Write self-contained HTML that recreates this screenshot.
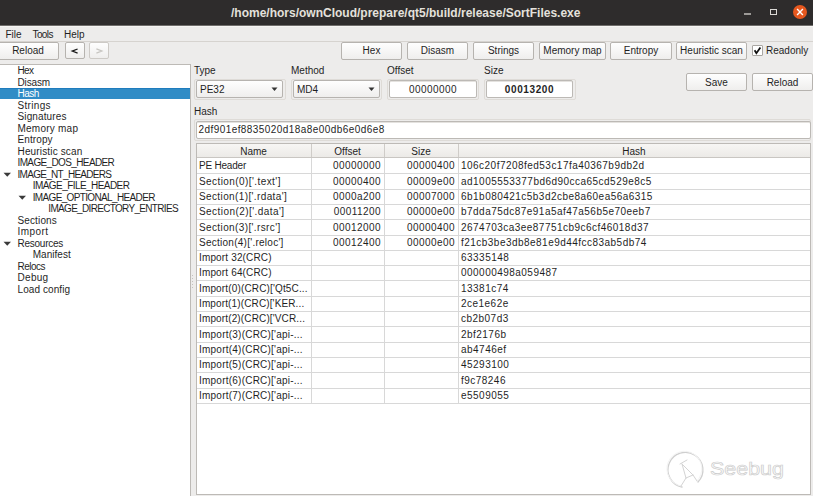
<!DOCTYPE html>
<html><head><meta charset="utf-8">
<style>
*{margin:0;padding:0;box-sizing:border-box}
html,body{width:813px;height:496px;overflow:hidden;background:#edeceb;font-family:"Liberation Sans",sans-serif;font-size:10px;color:#1f1f1f}
.a{position:absolute}
.t{position:absolute;white-space:nowrap;line-height:12px;height:12px}
#title{left:0;top:0;width:813px;height:25px;background:#2e2c2c}
.btn{position:absolute;height:18px;border:1px solid #b6b3af;border-radius:2px;background:linear-gradient(#fefefe,#efeeed);text-align:center;line-height:15px;color:#1f1f1f;white-space:nowrap}
.frame{position:absolute;border:1px solid #dedbd7;border-radius:2px}
.edit{position:absolute;background:#fff;border:1px solid #bcb9b5;border-radius:2px;box-shadow:inset 0 1px 0 #e4e2df}
.hl{position:absolute;height:1px;background:#d8d8d8}
.vl{position:absolute;width:1px;background:#d8d8d8}
.tr{position:absolute;white-space:nowrap;line-height:12px}
</style></head><body>
<div id="title" class="a"></div>
<div class="a" style="left:0;top:25px;width:813px;height:1px;background:#6f6d6b"></div>
<div class="a" style="left:0;top:26px;width:813px;height:1px;background:#f6f5f3"></div>
<div class="t" style="left:231px;top:6px;font-weight:bold;font-size:12px;color:#e4e1dc;line-height:14px;height:14px">/home/hors/ownCloud/prepare/qt5/build/release/SortFiles.exe</div>
<!-- window buttons -->
<div class="a" style="left:744px;top:13px;width:7px;height:2px;background:#9c9a97"></div>
<div class="a" style="left:770px;top:9px;width:7px;height:6px;border:1px solid #dcdad6"></div>
<div class="a" style="left:792.5px;top:5px;width:14px;height:14px;border-radius:50%;background:#e6581f"></div>
<svg class="a" style="left:792.5px;top:5px" width="14" height="14"><path d="M4.1 4.1L9.9 9.9M9.9 4.1L4.1 9.9" stroke="#fff" stroke-width="1.4"/></svg>

<!-- menu -->
<div class="t" style="left:5.5px;top:28.5px">File</div>
<div class="t" style="left:32.5px;top:28.5px;letter-spacing:-0.6px">Tools</div>
<div class="t" style="left:64px;top:28.5px">Help</div>
<div class="a" style="left:0;top:41px;width:813px;height:1px;background:#d6d3cf"></div>

<!-- toolbar -->
<div class="btn" style="left:-3px;top:42px;width:62px">Reload</div>
<div class="btn" style="left:65px;top:42px;width:20px;height:17px"></div>
<svg class="a" style="left:65px;top:42px" width="20" height="17"><path d="M12.6 7L7.2 9.1L12.6 11.2" stroke="#1a1a1a" stroke-width="1.25" fill="none"/></svg>
<div class="btn" style="left:89px;top:42px;width:20px;height:17px;border-color:#cdcac6"></div>
<svg class="a" style="left:89px;top:42px" width="20" height="17"><path d="M7.4 6.9L12.8 9L7.4 11.1" stroke="#c8c6c2" stroke-width="1.3" fill="none"/></svg>
<div class="btn" style="left:341px;top:42px;width:61px">Hex</div>
<div class="btn" style="left:407px;top:42px;width:61px">Disasm</div>
<div class="btn" style="left:473px;top:42px;width:61px">Strings</div>
<div class="btn" style="left:539px;top:42px;width:67px">Memory map</div>
<div class="btn" style="left:610px;top:42px;width:62px">Entropy</div>
<div class="btn" style="left:676px;top:42px;width:71px">Heuristic scan</div>
<div class="a" style="left:752px;top:45px;width:11px;height:11px;background:#fff;border:1px solid #a9a6a2;border-radius:1px"></div>
<svg class="a" style="left:752px;top:45px" width="11" height="11"><path d="M2.6 5.2L4.4 8.2L8.4 2.6" stroke="#111" stroke-width="1.8" fill="none"/></svg>
<div class="t" style="left:766px;top:45px">Readonly</div>

<!-- tree -->
<div class="a" style="left:0;top:64px;width:191px;height:432px;background:#fff;border-top:1px solid #bdbab6;border-right:1px solid #bdbab6"></div>
<div class="a" style="left:0;top:88px;width:190px;height:11px;background:#308cc6;border-top:1px solid #1f7cbd"></div>
<div class="tr" style="left:17.5px;top:65.03px;color:#1f1f1f;letter-spacing:-0.700px;">Hex</div>
<div class="tr" style="left:17.5px;top:76.53px;color:#1f1f1f;letter-spacing:-0.140px;">Disasm</div>
<div class="tr" style="left:17.5px;top:88.03px;color:#fff;letter-spacing:-0.533px;">Hash</div>
<div class="tr" style="left:17.5px;top:99.53px;color:#1f1f1f;letter-spacing:0.333px;">Strings</div>
<div class="tr" style="left:17.5px;top:111.03px;color:#1f1f1f;letter-spacing:0.122px;">Signatures</div>
<div class="tr" style="left:17.5px;top:122.53px;color:#1f1f1f;letter-spacing:0.233px;">Memory map</div>
<div class="tr" style="left:17.5px;top:134.03px;color:#1f1f1f;letter-spacing:0.100px;">Entropy</div>
<div class="tr" style="left:17.5px;top:145.53px;color:#1f1f1f;letter-spacing:0.154px;">Heuristic scan</div>
<div class="tr" style="left:17.5px;top:157.03px;color:#1f1f1f;letter-spacing:-0.627px;">IMAGE_DOS_HEADER</div>
<div class="tr" style="left:17.5px;top:168.53px;color:#1f1f1f;letter-spacing:-0.700px;">IMAGE_NT_HEADERS</div>
<svg class="a" style="left:3.0px;top:172.0px" width="9" height="6"><path d="M0.5 0.8H8L4.25 4.8z" fill="#3a3a3a"/></svg>
<div class="tr" style="left:32.7px;top:180.03px;color:#1f1f1f;letter-spacing:-0.555px;">IMAGE_FILE_HEADER</div>
<div class="tr" style="left:32.7px;top:191.53px;color:#1f1f1f;letter-spacing:-0.645px;">IMAGE_OPTIONAL_HEADER</div>
<svg class="a" style="left:18.2px;top:195.0px" width="9" height="6"><path d="M0.5 0.8H8L4.25 4.8z" fill="#3a3a3a"/></svg>
<div class="tr" style="left:48.3px;top:203.03px;color:#1f1f1f;letter-spacing:-0.680px;">IMAGE_DIRECTORY_ENTRIES</div>
<div class="tr" style="left:17.5px;top:214.53px;color:#1f1f1f;letter-spacing:0.129px;">Sections</div>
<div class="tr" style="left:17.5px;top:226.03px;color:#1f1f1f;letter-spacing:0.420px;">Import</div>
<div class="tr" style="left:17.5px;top:237.53px;color:#1f1f1f;letter-spacing:-0.250px;">Resources</div>
<svg class="a" style="left:3.0px;top:241.0px" width="9" height="6"><path d="M0.5 0.8H8L4.25 4.8z" fill="#3a3a3a"/></svg>
<div class="tr" style="left:32.7px;top:249.03px;color:#1f1f1f;letter-spacing:0.043px;">Manifest</div>
<div class="tr" style="left:17.5px;top:260.53px;color:#1f1f1f;letter-spacing:-0.520px;">Relocs</div>
<div class="tr" style="left:17.5px;top:272.03px;color:#1f1f1f;letter-spacing:0.300px;">Debug</div>
<div class="tr" style="left:17.5px;top:283.53px;color:#1f1f1f;letter-spacing:0.090px;">Load config</div>

<!-- right panel -->
<div class="t" style="left:194px;top:65px">Type</div>
<div class="t" style="left:291px;top:65px">Method</div>
<div class="t" style="left:387px;top:65px">Offset</div>
<div class="t" style="left:484px;top:65px">Size</div>

<div class="frame" style="left:194px;top:79px;width:92px;height:21px"></div>
<div class="btn" style="left:196px;top:80px;width:87px;height:18px;text-align:left;padding-left:3px;line-height:17px">PE32</div>
<svg class="a" style="left:271px;top:87px" width="8" height="5"><path d="M0.5 0.5H6.5L3.5 4z" fill="#333"/></svg>
<div class="frame" style="left:291px;top:79px;width:91px;height:21px"></div>
<div class="btn" style="left:293px;top:80px;width:87px;height:18px;text-align:left;padding-left:3px;line-height:17px">MD4</div>
<svg class="a" style="left:368px;top:87px" width="8" height="5"><path d="M0.5 0.5H6.5L3.5 4z" fill="#333"/></svg>

<div class="frame" style="left:387px;top:79px;width:92px;height:21px"></div>
<div class="edit" style="left:389px;top:80px;width:88px;height:18px;text-align:center;line-height:17px;letter-spacing:0.45px">00000000</div>
<div class="frame" style="left:484px;top:79px;width:92px;height:21px"></div>
<div class="edit" style="left:486px;top:80px;width:87px;height:18px;text-align:center;line-height:17px;font-weight:bold;letter-spacing:0.6px">00013200</div>

<div class="btn" style="left:686px;top:73px;width:61px;line-height:15px;padding-top:1px">Save</div>
<div class="btn" style="left:752px;top:73px;width:61px;line-height:15px;padding-top:1px">Reload</div>

<div class="t" style="left:194px;top:106px">Hash</div>
<div class="frame" style="left:194px;top:119px;width:617px;height:22px"></div>
<div class="edit" style="left:196px;top:121px;width:615px;height:18px;padding-left:1.5px;line-height:16px;letter-spacing:0.43px">2df901ef8835020d18a8e00db6e0d6e8</div>

<!-- table -->
<div class="a" style="left:196px;top:143px;width:615px;height:352px;background:#fff;border:1px solid #bdbab6"></div>
<div class="a" style="left:197px;top:144px;width:613px;height:13px;background:linear-gradient(#f7f6f4,#eceae7)"></div>
<div class="a" style="left:197px;top:157px;width:613px;height:1px;background:#c9c6c2"></div>
<div class="a" style="left:311px;top:144px;width:1px;height:13px;background:#cfccc8"></div>
<div class="a" style="left:384px;top:144px;width:1px;height:13px;background:#cfccc8"></div>
<div class="a" style="left:458px;top:144px;width:1px;height:13px;background:#cfccc8"></div>
<div class="tr" style="left:196px;width:115px;text-align:center;top:145.53px">Name</div>
<div class="tr" style="left:311px;width:73px;text-align:center;top:145.53px">Offset</div>
<div class="tr" style="left:384px;width:74px;text-align:center;top:145.53px">Size</div>
<div class="tr" style="left:458px;width:352px;text-align:center;top:145.53px">Hash</div>
<div class="vl" style="left:311px;top:158px;height:244.8px"></div>
<div class="vl" style="left:384px;top:158px;height:244.8px"></div>
<div class="vl" style="left:458px;top:158px;height:244.8px"></div>
<div class="hl" style="left:197px;width:613px;top:173.3px"></div>
<div class="tr" style="left:199px;top:160.33px;letter-spacing:-0.21px">PE Header</div>
<div class="tr" style="left:311px;width:70px;text-align:right;top:160.33px;letter-spacing:0.45px">00000000</div>
<div class="tr" style="left:384px;width:71px;text-align:right;top:160.33px;letter-spacing:0.45px">00000400</div>
<div class="tr" style="left:461px;top:160.33px;letter-spacing:0.47px">106c20f7208fed53c17fa40367b9db2d</div>
<div class="hl" style="left:197px;width:613px;top:188.6px"></div>
<div class="tr" style="left:199px;top:175.63px;letter-spacing:0.42px">Section(0)['.text']</div>
<div class="tr" style="left:311px;width:70px;text-align:right;top:175.63px;letter-spacing:0.45px">00000400</div>
<div class="tr" style="left:384px;width:71px;text-align:right;top:175.63px;letter-spacing:0.45px">00009e00</div>
<div class="tr" style="left:461px;top:175.63px;letter-spacing:0.47px">ad1005553377bd6d90cca65cd529e8c5</div>
<div class="hl" style="left:197px;width:613px;top:203.9px"></div>
<div class="tr" style="left:199px;top:190.93px;letter-spacing:0.38px">Section(1)['.rdata']</div>
<div class="tr" style="left:311px;width:70px;text-align:right;top:190.93px;letter-spacing:0.45px">0000a200</div>
<div class="tr" style="left:384px;width:71px;text-align:right;top:190.93px;letter-spacing:0.45px">00007000</div>
<div class="tr" style="left:461px;top:190.93px;letter-spacing:0.47px">6b1b080421c5b3d2cbe8a60ea56a6315</div>
<div class="hl" style="left:197px;width:613px;top:219.2px"></div>
<div class="tr" style="left:199px;top:206.23px;letter-spacing:0.44px">Section(2)['.data']</div>
<div class="tr" style="left:311px;width:70px;text-align:right;top:206.23px;letter-spacing:0.45px">00011200</div>
<div class="tr" style="left:384px;width:71px;text-align:right;top:206.23px;letter-spacing:0.45px">00000e00</div>
<div class="tr" style="left:461px;top:206.23px;letter-spacing:0.47px">b7dda75dc87e91a5af47a56b5e70eeb7</div>
<div class="hl" style="left:197px;width:613px;top:234.5px"></div>
<div class="tr" style="left:199px;top:221.53px;letter-spacing:0.38px">Section(3)['.rsrc']</div>
<div class="tr" style="left:311px;width:70px;text-align:right;top:221.53px;letter-spacing:0.45px">00012000</div>
<div class="tr" style="left:384px;width:71px;text-align:right;top:221.53px;letter-spacing:0.45px">00000400</div>
<div class="tr" style="left:461px;top:221.53px;letter-spacing:0.47px">2674703ca3ee87751cb9c6cf46018d37</div>
<div class="hl" style="left:197px;width:613px;top:249.8px"></div>
<div class="tr" style="left:199px;top:236.83px;letter-spacing:0.26px">Section(4)['.reloc']</div>
<div class="tr" style="left:311px;width:70px;text-align:right;top:236.83px;letter-spacing:0.45px">00012400</div>
<div class="tr" style="left:384px;width:71px;text-align:right;top:236.83px;letter-spacing:0.45px">00000e00</div>
<div class="tr" style="left:461px;top:236.83px;letter-spacing:0.47px">f21cb3be3db8e81e9d44fcc83ab5db74</div>
<div class="hl" style="left:197px;width:613px;top:265.1px"></div>
<div class="tr" style="left:199px;top:252.13px;letter-spacing:0.15px">Import 32(CRC)</div>
<div class="tr" style="left:461px;top:252.13px;letter-spacing:0.47px">63335148</div>
<div class="hl" style="left:197px;width:613px;top:280.4px"></div>
<div class="tr" style="left:199px;top:267.43px;letter-spacing:0.15px">Import 64(CRC)</div>
<div class="tr" style="left:461px;top:267.43px;letter-spacing:0.47px">000000498a059487</div>
<div class="hl" style="left:197px;width:613px;top:295.7px"></div>
<div class="tr" style="left:199px;top:282.73px;letter-spacing:0.15px">Import(0)(CRC)['Qt5C...</div>
<div class="tr" style="left:461px;top:282.73px;letter-spacing:0.47px">13381c74</div>
<div class="hl" style="left:197px;width:613px;top:311.0px"></div>
<div class="tr" style="left:199px;top:298.03px;letter-spacing:0.13px">Import(1)(CRC)['KER...</div>
<div class="tr" style="left:461px;top:298.03px;letter-spacing:0.47px">2ce1e62e</div>
<div class="hl" style="left:197px;width:613px;top:326.3px"></div>
<div class="tr" style="left:199px;top:313.33px;letter-spacing:0.14px">Import(2)(CRC)['VCR...</div>
<div class="tr" style="left:461px;top:313.33px;letter-spacing:0.47px">cb2b07d3</div>
<div class="hl" style="left:197px;width:613px;top:341.6px"></div>
<div class="tr" style="left:199px;top:328.63px;letter-spacing:0.23px">Import(3)(CRC)['api-...</div>
<div class="tr" style="left:461px;top:328.63px;letter-spacing:0.47px">2bf2176b</div>
<div class="hl" style="left:197px;width:613px;top:356.9px"></div>
<div class="tr" style="left:199px;top:343.93px;letter-spacing:0.23px">Import(4)(CRC)['api-...</div>
<div class="tr" style="left:461px;top:343.93px;letter-spacing:0.47px">ab4746ef</div>
<div class="hl" style="left:197px;width:613px;top:372.2px"></div>
<div class="tr" style="left:199px;top:359.23px;letter-spacing:0.23px">Import(5)(CRC)['api-...</div>
<div class="tr" style="left:461px;top:359.23px;letter-spacing:0.47px">45293100</div>
<div class="hl" style="left:197px;width:613px;top:387.5px"></div>
<div class="tr" style="left:199px;top:374.53px;letter-spacing:0.23px">Import(6)(CRC)['api-...</div>
<div class="tr" style="left:461px;top:374.53px;letter-spacing:0.47px">f9c78246</div>
<div class="hl" style="left:197px;width:613px;top:402.8px"></div>
<div class="tr" style="left:199px;top:389.83px;letter-spacing:0.23px">Import(7)(CRC)['api-...</div>
<div class="tr" style="left:461px;top:389.83px;letter-spacing:0.47px">e5509055</div>

<!-- splitter handle -->
<svg class="a" style="left:191px;top:274px" width="3" height="16"><g fill="#c4c1bd"><rect x="1" y="1" width="1" height="1"/><rect x="1" y="4" width="1" height="1"/><rect x="1" y="7" width="1" height="1"/><rect x="1" y="10" width="1" height="1"/><rect x="1" y="13" width="1" height="1"/></g></svg>
<!-- watermark -->
<svg class="a" style="left:660px;top:440px" width="140" height="56">
<g fill="none" stroke-linecap="round">
<path d="M37 41 A17.5 17.5 0 1 0 21 46" stroke="#cfcfcf" stroke-width="1.3" transform="translate(1,1)"/>
<path d="M37 41 A17.5 17.5 0 1 0 21 46" stroke="#f4f4f4" stroke-width="1"/>
<path d="M20 24 L27 20 M22 24 L26 38 M22 24 L33 35 M26 38 L33 35 M37 41 L33 35 M21 46 L26 38" stroke="#d4d4d4" stroke-width="1"/>
</g>
<text x="50" y="34.5" font-family="Liberation Sans" font-size="19" textLength="74" lengthAdjust="spacingAndGlyphs" fill="#fdfdfd" stroke="#cdcdcd" stroke-width="0.7">Seebug</text>
</svg>
</body></html>
